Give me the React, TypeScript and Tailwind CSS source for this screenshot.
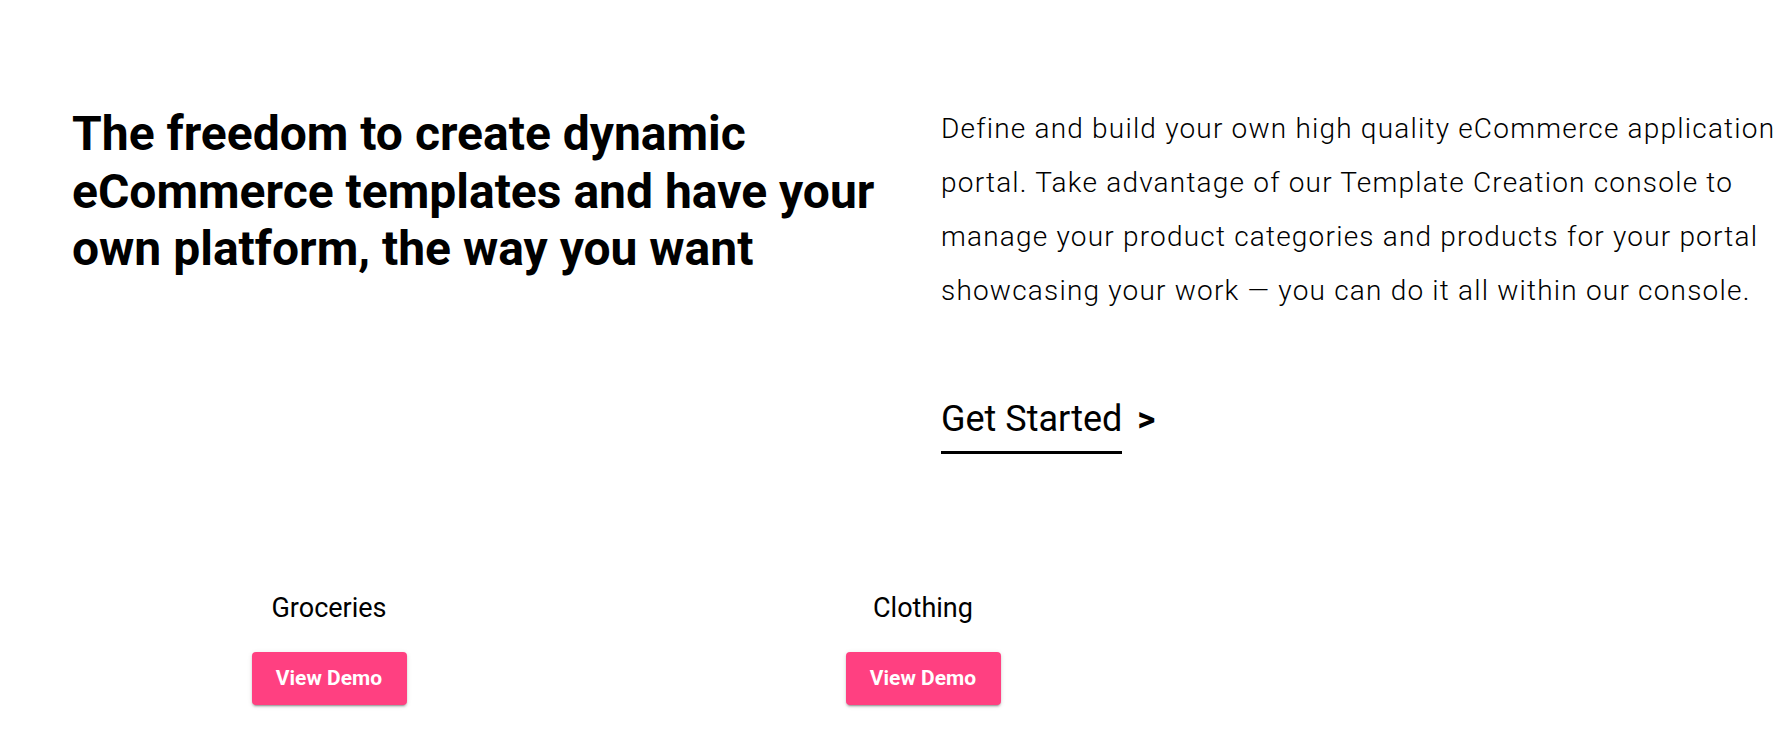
import React from 'react'

const templates = [
  { name: 'Groceries', href: '#groceries' },
  { name: 'Clothing', href: '#clothing' },
]

export default function App() {
  return (
    <div className="min-h-screen bg-white text-black font-['Roboto','Liberation_Sans',sans-serif]">
      {/* Hero: headline left, pitch + CTA right */}
      <section className="flex pt-[102px]">
        <div className="w-[893px] shrink-0 pl-[72px]">
          <h1 className="mt-[3px] w-[821px] text-[48px] font-bold leading-[1.2]">
            The freedom to create dynamic eCommerce templates and have your own platform, the way you want
          </h1>
        </div>

        <div className="flex-1 pl-[48px]">
          <p className="text-[28px] font-light leading-[54px] tracking-[1.2px]">
            Define and build your own high quality eCommerce application portal. Take advantage of our Template
            Creation console to manage your product categories and products for your portal showcasing your work — you
            can do it all within our console.
          </p>

          <a href="#get-started" className="mt-[80px] inline-flex items-baseline text-[36px] leading-[42px]">
            <span className="border-b-[3px] border-black pb-[11px]">Get Started</span>
            <span className="ml-[15px] text-[35px] font-bold">&gt;</span>
          </a>
        </div>
      </section>

      {/* Template demos */}
      <section className="mt-[138px] flex pl-[32px]">
        {templates.map((t) => (
          <div key={t.name} className="flex w-[594px] flex-col items-center">
            <h3 className="text-[27px] font-normal leading-[32px]">{t.name}</h3>
            <a
              href={t.href}
              className="mt-[28px] flex h-[53px] w-[155px] items-center justify-center rounded bg-[#ff4081] text-[21px] font-bold text-white shadow-[0px_3px_1px_-2px_rgba(0,0,0,0.2),0px_2px_2px_0px_rgba(0,0,0,0.14),0px_1px_5px_0px_rgba(0,0,0,0.12)]"
            >
              View Demo
            </a>
          </div>
        ))}
      </section>
    </div>
  )
}
